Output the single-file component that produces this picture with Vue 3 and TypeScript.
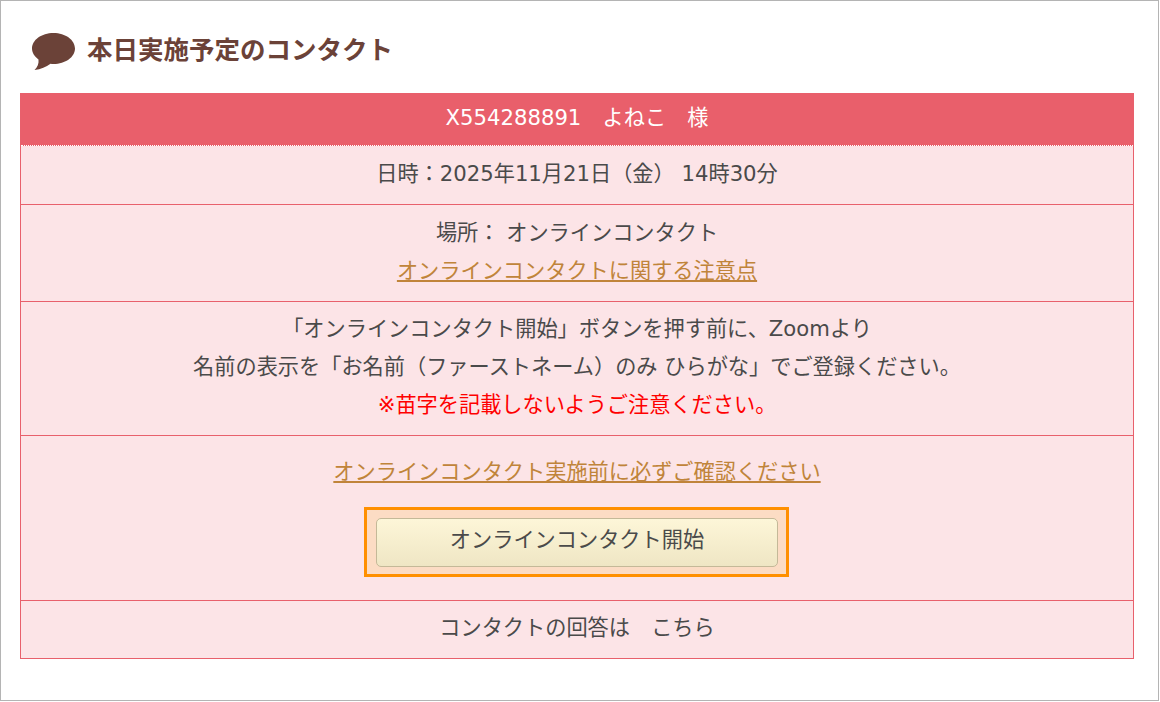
<script setup lang="ts">
const contact = {
  name: 'X554288891　よねこ　様',
  date: '日時：2025年11月21日（金） 14時30分',
  place: '場所： オンラインコンタクト',
}
</script>

<template>
  <div class="frame">
    <h2 class="title">
      <svg class="title-icon" width="46" height="38" viewBox="0 0 46 38">
        <path
          d="M22.500 0C34.500 0 44 7 44 15.500C44 24 34.500 31 22.500 31C21.500 31 20.500 31 19.500 30.800C15 34 10 36.500 3.500 37C6.500 34.500 8 30.500 7.500 26.500C3.500 23.500 1 19.500 1 15.500C1 7 10.500 0 22.500 0Z"
          fill="#6b4238"
        />
      </svg>
      本日実施予定のコンタクト
    </h2>

    <div class="table">
      <div class="head">{{ contact.name }}</div>
      <div class="row row-date">{{ contact.date }}</div>
      <div class="row row-place">
        <p>{{ contact.place }}</p>
        <p><a href="#">オンラインコンタクトに関する注意点</a></p>
      </div>
      <div class="row row-note">
        <p>「オンラインコンタクト開始」ボタンを押す前に、Zoomより</p>
        <p>名前の表示を「お名前（ファーストネーム）のみ ひらがな」でご登録ください。</p>
        <p class="warn">※苗字を記載しないようご注意ください。</p>
      </div>
      <div class="row row-start">
        <p><a href="#">オンラインコンタクト実施前に必ずご確認ください</a></p>
        <div class="start-box">
          <button class="start-btn" type="button">オンラインコンタクト開始</button>
        </div>
      </div>
      <div class="row row-answer">コンタクトの回答は　こちら</div>
    </div>
  </div>
</template>

<style>
html,
body {
  margin: 0;
  background: #fff;
}
</style>

<style scoped>
.frame {
  box-sizing: border-box;
  width: 1159px;
  height: 701px;
  border: 1px solid #b4b4b4;
  padding: 30px 24px 0 19px;
  background: #fff;
  font-family: 'DejaVu Sans', 'Noto Sans CJK JP', sans-serif;
  color: #4a4a4a;
}

.title {
  display: flex;
  align-items: center;
  gap: 10px;
  height: 38px;
  margin: 0 0 24px 11px;
  font-size: 25.500px;
  font-weight: 700;
  line-height: 34px;
  color: #6b4238;
}

.title-icon {
  flex: none;
  margin-top: 3px;
}

.table {
  border: 1px solid #e8606c;
  background: #fce4e7;
  text-align: center;
  font-size: 21.200px;
}

.head {
  height: 52px;
  line-height: 47px;
  background: #e95f6b;
  color: #fff;
  border-bottom: 1px dotted #fff;
  box-sizing: border-box;
}

.row {
  box-sizing: border-box;
  border-bottom: 1px solid #e8606c;
}

.row:last-child {
  border-bottom: 0;
}

.row p {
  margin: 0;
  height: 39px;
  line-height: 37px;
}

.row-date {
  height: 59px;
  line-height: 55px;
}

.row-place {
  height: 97px;
  padding-top: 9px;
}

.row-place p + p {
  margin-top: -1px;
}

.row-note {
  height: 134px;
  padding-top: 8px;
}

.row-note p + p {
  margin-top: -1px;
}

.row-start {
  height: 165px;
  padding-top: 17px;
}

.row-answer {
  height: 57px;
  line-height: 53px;
}

.warn {
  color: #ff0000;
}

a {
  color: #c0843a;
  text-decoration: underline;
}

.start-box {
  box-sizing: border-box;
  width: 425px;
  height: 70px;
  margin: 15px 0 0 343px;
  padding: 8px 8px 8px 9px;
  border: 3px solid #ff9000;
  background: #fcdcc4;
}

.start-btn {
  display: block;
  width: 100%;
  height: 49px;
  padding: 0 0 11px;
  border: 1px solid #c4b998;
  border-radius: 5px;
  background: linear-gradient(#fdf6d8, #efe6c4);
  font-family: inherit;
  font-size: 21.200px;
  color: #4a4a4a;
}
</style>
